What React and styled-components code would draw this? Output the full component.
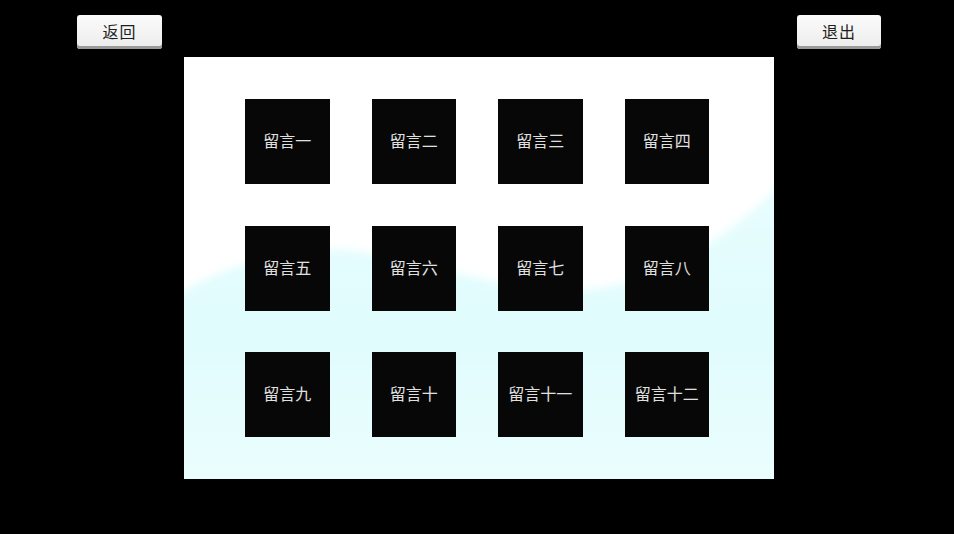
import React from "react";
import styled, { createGlobalStyle } from "styled-components";

const Global = createGlobalStyle`
  html, body { margin: 0; padding: 0; background: #000; }
  body {
    width: 954px; height: 534px; overflow: hidden;
    font-family: "Noto Sans CJK SC", "Noto Sans", sans-serif;
    -webkit-font-smoothing: antialiased;
  }
`;

const Page = styled.div`
  width: 954px;
  height: 534px;
  background: #000;
  display: flex;
  flex-direction: column;
`;

const TopBar = styled.div`
  display: flex;
  justify-content: space-between;
  padding: 15px 73px 0 77px;
`;

const NavButton = styled.button`
  width: ${(p) => p.$w || 85}px;
  height: 34px;
  box-sizing: border-box;
  border: none;
  border-radius: 3px;
  background: linear-gradient(#fbfbfb, #ececec);
  box-shadow: inset 0 -3px 0 #9a9a9a;
  padding: 0 0 3px;
  font-family: "Noto Sans CJK SC", sans-serif;
  font-size: 16px;
  color: #1e1e1e;
  letter-spacing: 1px;
  cursor: pointer;
`;

const Panel = styled.div`
  position: relative;
  margin: 8px 0 0 184px;
  width: 590px;
  height: 422px;
  box-sizing: border-box;
  background: #fff;
  padding: 42px 65px 42px 61px;
  overflow: hidden;
`;

const Wave = styled.svg`
  position: absolute;
  inset: 0;
  width: 590px;
  height: 422px;
`;

const Grid = styled.div`
  position: relative;
  display: grid;
  grid-template-columns: repeat(4, 84.5px);
  grid-auto-rows: 85px;
  column-gap: 42px;
  row-gap: 41.5px;
`;

const Tile = styled.div`
  background: #070707;
  display: flex;
  align-items: center;
  justify-content: center;
  padding-bottom: 3px;
  box-sizing: border-box;
  color: #e0e0e0;
  font-family: "Noto Sans CJK SC", sans-serif;
  font-size: 16px;
  font-weight: 400;
  white-space: nowrap;
  cursor: pointer;
`;

const labels = ["一", "二", "三", "四", "五", "六", "七", "八", "九", "十", "十一", "十二"];

export default function App() {
  return (
    <Page>
      <Global />
      <TopBar>
        <NavButton>返回</NavButton>
        <NavButton $w={84}>退出</NavButton>
      </TopBar>
      <Panel>
        <Wave viewBox="0 0 590 422" preserveAspectRatio="none">
          <defs>
            <linearGradient id="cy" x1="0" y1="0" x2="0" y2="1">
              <stop offset="0" stopColor="#e8fdfe" />
              <stop offset="0.5" stopColor="#e0fcfd" />
              <stop offset="1" stopColor="#ecfefe" />
            </linearGradient>
            <filter id="soft" x="-10%" y="-10%" width="120%" height="120%">
              <feGaussianBlur stdDeviation="4" />
            </filter>
          </defs>
          <path
            d="M-20,250 C20,212 110,188 166,193 C236,201 336,243 416,231 C496,218 556,168 610,115 L610,440 L-20,440 Z"
            fill="url(#cy)"
            filter="url(#soft)"
          />
        </Wave>
        <Grid>
          {labels.map((l) => (
            <Tile key={l}>留言{l}</Tile>
          ))}
        </Grid>
      </Panel>
    </Page>
  );
}
